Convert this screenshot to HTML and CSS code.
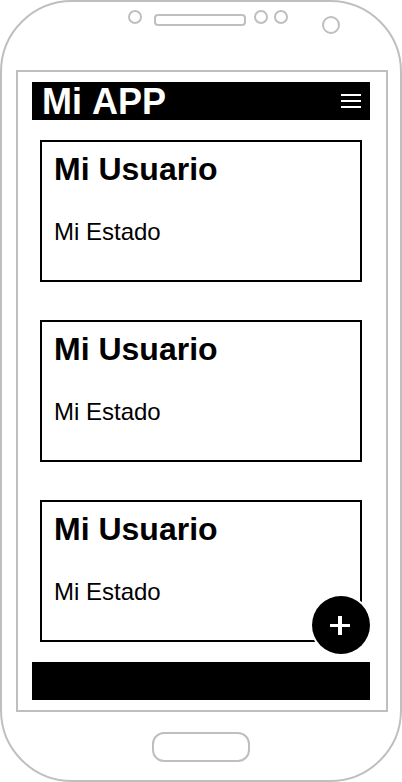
FILE: index.html
```html
<!DOCTYPE html>
<html lang="es">
<head>
<meta charset="utf-8">
<meta name="viewport" content="width=device-width, initial-scale=1">
<title>Mi APP</title>
<link rel="stylesheet" href="styles.css">
</head>
<body>
<div class="phone">
  <div class="bezel-top">
    <div class="sensors sensors-left"><span class="dot"></span></div>
    <span class="speaker"></span>
    <div class="sensors sensors-right">
      <span class="dot"></span>
      <span class="dot"></span>
      <span class="camera"></span>
    </div>
  </div>
  <div class="screen">
    <header class="app-bar">
      <h1 class="app-title">Mi APP</h1>
      <button class="menu-button" type="button" aria-label="Menú">
        <svg width="20" height="16" viewBox="0 0 20 16" fill="none" stroke="#fff" stroke-width="2"><path d="M0 2h20M0 8h20M0 14h20"/></svg>
      </button>
    </header>
    <main class="feed">
      <article class="card">
        <h2 class="user">Mi Usuario</h2>
        <p class="status">Mi Estado</p>
      </article>
      <article class="card">
        <h2 class="user">Mi Usuario</h2>
        <p class="status">Mi Estado</p>
      </article>
      <article class="card">
        <h2 class="user">Mi Usuario</h2>
        <p class="status">Mi Estado</p>
      </article>
    </main>
    <footer class="bottom-bar">
      <button class="add-button" type="button" aria-label="Añadir">
        <svg width="20" height="20" viewBox="0 0 20 20" fill="none" stroke="#fff"><path stroke-width="3" d="M0 10.5h20"/><path stroke-width="4" d="M10 1v19"/></svg>
      </button>
    </footer>
  </div>
  <div class="bezel-bottom">
    <button class="home-button" type="button" aria-label="Inicio"></button>
  </div>
</div>
</body>
</html>
```
FILE: styles.css
```css
* {
  box-sizing: border-box;
}

body {
  margin: 0;
  background: #fff;
  color: #000;
  font-family: "Liberation Sans", Arial, sans-serif;
}

h1,
h2,
p {
  margin: 0;
}

button {
  padding: 0;
  border: 0;
  background: none;
}

svg {
  display: block;
}

.phone {
  display: flex;
  flex-direction: column;
  min-height: 100vh;
  padding: 0 12px 0 14px;
  border: 2px solid #bfbfbf;
  border-radius: 72px;
}

.bezel-top {
  display: grid;
  grid-template-columns: 1fr 92px 1fr;
  align-items: start;
  height: 68px;
  padding: 8px 4px 0 0;
}

.sensors {
  display: flex;
}

.sensors-left {
  justify-content: flex-end;
  padding-right: 12px;
}

.sensors-right {
  gap: 6px;
  padding-left: 8px;
}

.dot,
.camera,
.speaker {
  border: 2px solid #bfbfbf;
}

.dot {
  width: 14px;
  height: 14px;
  border-radius: 50%;
}

.camera {
  width: 18px;
  height: 18px;
  margin: 6px 0 0 28px;
  border-radius: 50%;
}

.speaker {
  height: 12px;
  margin-top: 4px;
  border-radius: 4px;
}

.screen {
  display: flex;
  flex: 1;
  flex-direction: column;
  padding: 10px 16px 10px 14px;
  border: 2px solid #bfbfbf;
}

.app-bar {
  display: flex;
  align-items: center;
  justify-content: space-between;
  height: 38px;
  padding: 0 9px 0 10px;
  background: #000;
  color: #fff;
}

.app-title {
  font-size: 36px;
  line-height: 38px;
  padding-top: 2px;
  font-kerning: none;
}

.feed {
  display: flex;
  flex: 1;
  flex-direction: column;
  gap: 38px;
  padding: 20px 8px;
}

.card {
  height: 142px;
  padding: 10px 12px;
  border: 2px solid #000;
}

.user {
  margin-bottom: 32px;
  font-size: 32px;
  line-height: 34px;
}

.status {
  font-size: 24px;
  line-height: 28px;
}

.bottom-bar {
  position: relative;
  height: 38px;
  background: #000;
}

.add-button {
  position: absolute;
  right: 0;
  bottom: 46px;
  display: flex;
  align-items: center;
  justify-content: center;
  width: 58px;
  height: 58px;
  padding-right: 2px;
  border-radius: 50%;
  background: #000;
  box-shadow: 0 0 0 2px #fff;
}

.bezel-bottom {
  display: flex;
  align-items: center;
  justify-content: center;
  height: 68px;
  padding: 2px 2px 0 0;
}

.home-button {
  width: 98px;
  height: 30px;
  border: 2px solid #bfbfbf;
  border-radius: 12px;
}
```
